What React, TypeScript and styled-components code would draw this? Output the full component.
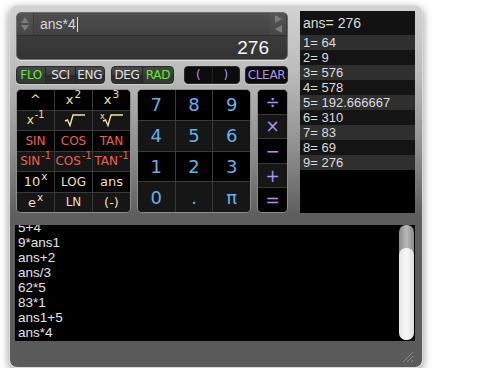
import React from "react";
import styled, { createGlobalStyle } from "styled-components";

const GlobalStyle = createGlobalStyle`
  html, body {
    margin: 0;
    padding: 0;
    background: #ffffff;
  }
  body {
    font-family: "Liberation Sans", Arial, sans-serif;
  }
`;

const Window = styled.div`
  box-sizing: border-box;
  margin: 5px 0 0 9px;
  width: 414px;
  height: 363px;
  border-radius: 8px;
  border: 1px solid #dcdcdc;
  background: linear-gradient(
    to bottom,
    #d2d2d2 0%,
    #bcbcbc 18%,
    #8e8e8e 40%,
    #5e5e5e 58%,
    #5a5a5a 100%
  );
  box-shadow: 0 3px 8px rgba(0, 0, 0, 0.45);
  display: flex;
  flex-direction: column;
  padding: 6px 7px 0 5px;
`;

const Top = styled.div`
  display: flex;
  gap: 12px;
  padding-left: 1px;
`;

const LeftCol = styled.div`
  width: 272px;
  display: flex;
  flex-direction: column;
`;

/* ---------- display ---------- */

const Display = styled.div`
  box-sizing: border-box;
  height: 48px;
  border-radius: 5px;
  border: 1px solid #6e6e6e;
  box-shadow: 0 1px 0 rgba(255, 255, 255, 0.5);
  overflow: hidden;
  display: flex;
  flex-direction: column;
`;

const InputRow = styled.div`
  height: 22px;
  display: flex;
  background: linear-gradient(to bottom, #4e4e4e, #424242);
  border-bottom: 1px solid #2e2e2e;
`;

const Spinner = styled.div`
  width: 16px;
  border-right: 1px solid #3a3a3a;
  background: linear-gradient(to bottom, #555, #474747);
  display: flex;
  flex-direction: column;
  align-items: center;
  justify-content: center;
  gap: 2px;
`;

const Arrow = styled.div<{ dir: "up" | "down" | "left" | "right" }>`
  width: 0;
  height: 0;
  ${({ dir }) =>
    dir === "up"
      ? "border-left: 4px solid transparent; border-right: 4px solid transparent; border-bottom: 6px solid #7c7c7c;"
      : dir === "down"
      ? "border-left: 4px solid transparent; border-right: 4px solid transparent; border-top: 6px solid #7c7c7c;"
      : dir === "right"
      ? "border-top: 4px solid transparent; border-bottom: 4px solid transparent; border-left: 7px solid #7c7c7c;"
      : "border-top: 4px solid transparent; border-bottom: 4px solid transparent; border-right: 7px solid #7c7c7c;"}
`;

const InputText = styled.div`
  flex: 1;
  display: flex;
  align-items: center;
  padding-left: 6px;
  color: #d8d8d8;
  font-size: 14px;
`;

const Caret = styled.span`
  display: inline-block;
  width: 1px;
  height: 15px;
  background: #e0e0e0;
  margin-left: 1px;
`;

const ResultRow = styled.div`
  flex: 1;
  background: linear-gradient(to bottom, #3c3c3c, #333);
  color: #f4f4f4;
  font-size: 19px;
  display: flex;
  align-items: center;
  justify-content: flex-end;
  padding-right: 18px;
`;

/* ---------- mode buttons ---------- */

const ModeRow = styled.div`
  display: flex;
  margin-top: 6px;
  height: 18px;
`;

const Group = styled.div<{ w: number; gapAfter: number; dark?: boolean }>`
  box-sizing: border-box;
  width: ${({ w }) => w}px;
  margin-right: ${({ gapAfter }) => gapAfter}px;
  display: flex;
  border-radius: 4px;
  overflow: hidden;
  border: 1px solid #2a2a2a;
  box-shadow: 0 1px 0 rgba(255, 255, 255, 0.35);
  background: ${({ dark }) =>
    dark ? "#0c0c0c" : "linear-gradient(to bottom, #4a4a4a 0%, #3c3c3c 50%, #282828 51%, #303030 100%)"};
`;

const Seg = styled.div<{ active?: boolean; purple?: boolean }>`
  flex: 1;
  display: flex;
  align-items: center;
  justify-content: center;
  font-family: "DejaVu Sans", Verdana, sans-serif;
  font-size: 12px;
  letter-spacing: -0.3px;
  color: ${({ active, purple }) => (purple ? "#a894f2" : active ? "#66ec2e" : "#e2e2e2")};
  background: ${({ active }) => (active ? "rgba(60, 70, 60, 0.55)" : "transparent")};
  & + & {
    border-left: 1px solid #222;
  }
`;

/* ---------- keypad ---------- */

const Keypad = styled.div`
  display: flex;
  margin-top: 5px;
  height: 124px;
`;

const Pad = styled.div<{ w: number; cols: number; rows: number; mr: number }>`
  box-sizing: border-box;
  width: ${({ w }) => w}px;
  margin-right: ${({ mr }) => mr}px;
  display: grid;
  grid-template-columns: repeat(${({ cols }) => cols}, 1fr);
  grid-template-rows: repeat(${({ rows }) => rows}, 1fr);
  gap: 1px;
  background: #3a3a3a;
  border: 1px solid #8c8c8c;
  border-radius: 5px;
  overflow: hidden;
`;

const Key = styled.div<{ shade: boolean; tone: string; size: number }>`
  display: flex;
  align-items: center;
  justify-content: center;
  background: ${({ shade }) => (shade ? "#161616" : "#000")};
  color: ${({ tone }) => tone};
  font-family: "DejaVu Sans", Verdana, sans-serif;
  font-size: ${({ size }) => size}px;
  white-space: nowrap;
  sup {
    font-size: 0.8em;
    line-height: 0;
    vertical-align: baseline;
    position: relative;
    top: -0.55em;
    margin-left: 1px;
  }
`;

const Radical = ({ small }: { small?: boolean }) => (
  <svg width="24" height="14" viewBox="0 0 24 14" style={{ display: "block" }}>
    {small && (
      <text x="0" y="6" fontSize="8" fill="#f2e39a" fontFamily="DejaVu Sans, sans-serif">
        x
      </text>
    )}
    <path
      d="M3 8 L5.5 7 L8 12.5 L11 2 L23 2"
      fill="none"
      stroke="#f2e39a"
      strokeWidth="1.4"
    />
  </svg>
);

/* ---------- history ---------- */

const History = styled.div`
  width: 116px;
  height: 202px;
  margin-top: -1px;
  background: #000;
  display: flex;
  flex-direction: column;
  color: #dcdcdc;
  font-size: 13px;
`;

const AnsLine = styled.div`
  height: 24px;
  background: #121212;
  display: flex;
  align-items: center;
  padding-left: 3px;
  font-size: 14px;
`;

const HistLine = styled.div<{ odd: boolean }>`
  height: 15px;
  line-height: 15px;
  padding-left: 3px;
  background: ${({ odd }) => (odd ? "#2f2f2f" : "#141414")};
`;

/* ---------- log ---------- */

const Log = styled.div`
  margin-top: 12px;
  height: 116px;
  background: #000;
  position: relative;
  overflow: hidden;
  color: #e4e4e4;
  font-size: 13.5px;
`;

const LogLines = styled.div`
  margin-top: -5px;
  padding-left: 3px;
`;

const LogLine = styled.div`
  height: 15px;
  line-height: 15px;
`;

const ScrollTrack = styled.div`
  position: absolute;
  right: 1px;
  top: 0;
  width: 15px;
  height: 115px;
  border-radius: 7px;
  background: linear-gradient(to right, #8a8a8a, #b8b8b8, #8a8a8a);
  overflow: hidden;
  display: flex;
  flex-direction: column;
  justify-content: flex-end;
`;

const ScrollThumb = styled.div`
  height: 92px;
  border-radius: 7px;
  background: linear-gradient(to right, #e6e6e6, #f8f8f8, #dedede);
`;

const Footer = styled.div`
  flex: 1;
  display: flex;
  justify-content: flex-end;
  align-items: flex-end;
  padding-bottom: 4px;
`;

const Grip = () => (
  <svg width="13" height="12" viewBox="0 0 13 12">
    <path d="M1 11 L11 1 M5 11 L11 5 M9 11 L11 9" stroke="#8a8a8a" strokeWidth="1" />
  </svg>
);

const YELLOW = "#f2e39a";
const RED = "#ef604e";
const CREAM = "#f0dfb6";
const BLUE = "#62b2ee";
const PURPLE = "#ab93f2";

const funcKeys: { label: React.ReactNode; tone: string; size?: number }[] = [
  { label: "^", tone: YELLOW, size: 13 },
  { label: <>x<sup>2</sup></>, tone: YELLOW, size: 13 },
  { label: <>x<sup>3</sup></>, tone: YELLOW, size: 13 },
  { label: <>x<sup>-1</sup></>, tone: YELLOW, size: 12 },
  { label: <Radical />, tone: YELLOW },
  { label: <Radical small />, tone: YELLOW },
  { label: "SIN", tone: RED },
  { label: "COS", tone: RED },
  { label: "TAN", tone: RED },
  { label: <>SIN<sup>-1</sup></>, tone: RED },
  { label: <>COS<sup>-1</sup></>, tone: RED },
  { label: <>TAN<sup>-1</sup></>, tone: RED },
  { label: <>10<sup>x</sup></>, tone: CREAM, size: 13 },
  { label: "LOG", tone: CREAM },
  { label: "ans", tone: CREAM, size: 13 },
  { label: <>e<sup>x</sup></>, tone: CREAM, size: 13 },
  { label: "LN", tone: CREAM },
  { label: "(-)", tone: CREAM, size: 13 },
];

const numKeys = ["7", "8", "9", "4", "5", "6", "1", "2", "3", "0", ".", "π"];
const opKeys = ["÷", "×", "−", "+", "="];

const history = ["64", "9", "576", "578", "192.666667", "310", "83", "69", "276"];
const logLines = ["5+4", "9*ans1", "ans+2", "ans/3", "62*5", "83*1", "ans1+5", "ans*4"];

export default function App() {
  return (
    <>
      <GlobalStyle />
      <Window>
        <Top>
          <LeftCol>
            <Display>
              <InputRow>
                <Spinner>
                  <Arrow dir="up" />
                  <Arrow dir="down" />
                </Spinner>
                <InputText>
                  ans*4
                  <Caret />
                </InputText>
                <Spinner>
                  <Arrow dir="right" />
                  <Arrow dir="left" />
                </Spinner>
              </InputRow>
              <ResultRow>276</ResultRow>
            </Display>

            <ModeRow>
              <Group w={89} gapAfter={6}>
                <Seg active>FLO</Seg>
                <Seg>SCI</Seg>
                <Seg>ENG</Seg>
              </Group>
              <Group w={63} gapAfter={10}>
                <Seg>DEG</Seg>
                <Seg active>RAD</Seg>
              </Group>
              <Group w={56} gapAfter={5} dark>
                <Seg purple>(</Seg>
                <Seg purple>)</Seg>
              </Group>
              <Group w={43} gapAfter={0} dark>
                <Seg purple>CLEAR</Seg>
              </Group>
            </ModeRow>

            <Keypad>
              <Pad w={115} cols={3} rows={6} mr={6}>
                {funcKeys.map((k, i) => (
                  <Key key={i} shade={Math.floor(i / 3) % 2 === 1} tone={k.tone} size={k.size ?? 12}>
                    {k.label}
                  </Key>
                ))}
              </Pad>
              <Pad w={114} cols={3} rows={4} mr={6}>
                {numKeys.map((k, i) => (
                  <Key key={k} shade={Math.floor(i / 3) % 2 === 1} tone={BLUE} size={18}>
                    {k}
                  </Key>
                ))}
              </Pad>
              <Pad w={31} cols={1} rows={5} mr={0}>
                {opKeys.map((k, i) => (
                  <Key key={k} shade={i % 2 === 1} tone={PURPLE} size={17}>
                    {k}
                  </Key>
                ))}
              </Pad>
            </Keypad>
          </LeftCol>

          <History>
            <AnsLine>ans= 276</AnsLine>
            {history.map((v, i) => (
              <HistLine key={i} odd={i % 2 === 0}>
                {i + 1}= {v}
              </HistLine>
            ))}
          </History>
        </Top>

        <Log>
          <LogLines>
            {logLines.map((l, i) => (
              <LogLine key={i}>{l}</LogLine>
            ))}
          </LogLines>
          <ScrollTrack>
            <ScrollThumb />
          </ScrollTrack>
        </Log>

        <Footer>
          <Grip />
        </Footer>
      </Window>
    </>
  );
}
